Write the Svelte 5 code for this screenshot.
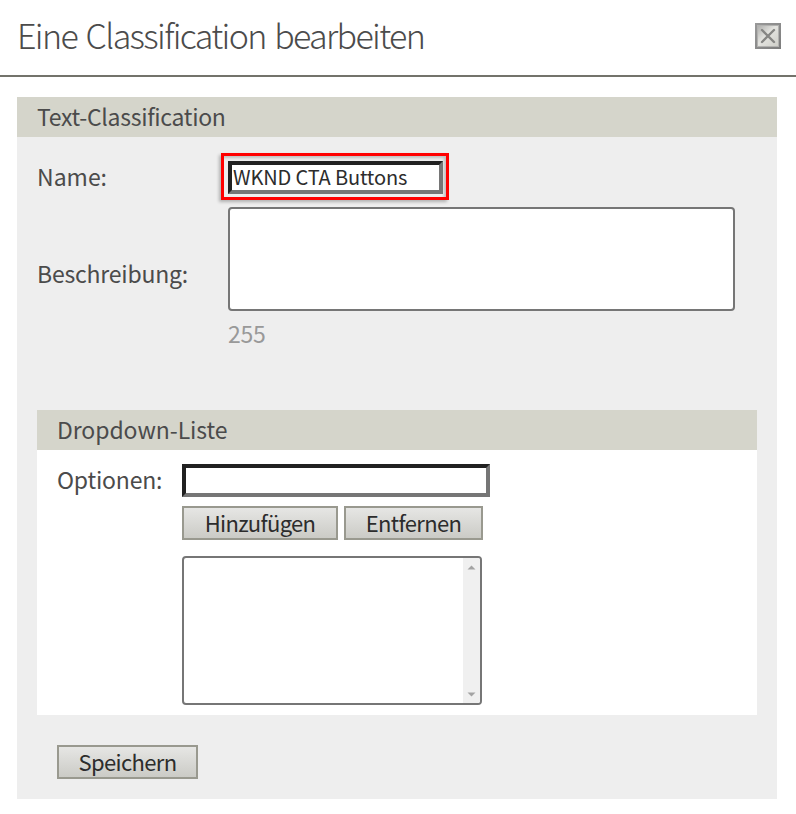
<script>
  let name = $state('WKND CTA Buttons');
  let description = $state('');
  let option = $state('');
  const limit = 255;
</script>

<main>
  <header>
    <h1>Eine Classification bearbeiten</h1>
    <button class="close" aria-label="Schließen">
      <svg width="26" height="26" viewBox="0 0 26 26">
        <defs>
          <linearGradient id="rim" x1="0" y1="0" x2="1" y2="1">
            <stop offset="0" stop-color="#999" />
            <stop offset="0.5" stop-color="#8c8c8c" />
            <stop offset="1" stop-color="#7c7c7c" />
          </linearGradient>
          <linearGradient id="face" x1="0" y1="0" x2="1" y2="1">
            <stop offset="0" stop-color="#b0b0ae" />
            <stop offset="0.45" stop-color="#e4e4e0" />
            <stop offset="1" stop-color="#cfcfc9" />
          </linearGradient>
        </defs>
        <rect width="26" height="26" fill="url(#rim)" />
        <rect x="2" y="2" width="22" height="22" fill="#b2b2b0" />
        <rect x="3" y="3" width="20" height="20" fill="url(#face)" />
        <path d="M7 7 19 19M19 7 7 19" stroke="#868684" stroke-width="2.4" stroke-linecap="round" />
      </svg>
    </button>
  </header>

  <section class="panel">
    <h2 class="panel-title">Text-Classification</h2>
    <div class="row name-row">
      <label for="name">Name:</label>
      <div class="highlight"><input id="name" bind:value={name} /></div>
    </div>
    <div class="row description-row">
      <label for="description">Beschreibung:</label>
      <textarea id="description" bind:value={description}></textarea>
    </div>
    <div class="counter">{limit - description.length}</div>

    <section class="dropdown">
      <h2>Dropdown-Liste</h2>
      <div class="options">
        <label for="option">Optionen:</label>
        <div class="controls">
          <input id="option" bind:value={option} />
          <div class="actions">
            <button class="action add">Hinzufügen</button>
            <button class="action remove">Entfernen</button>
          </div>
          <div class="list">
            <div class="scrollbar">
              <svg width="9" height="5" viewBox="0 0 9 5"><path d="M4.5 0.5 8.5 4.5H.5Z" fill="#a3a3a3" /></svg>
              <svg width="9" height="5" viewBox="0 0 9 5"><path d="M.5 .5H8.5L4.5 4.5Z" fill="#a3a3a3" /></svg>
            </div>
          </div>
        </div>
      </div>
    </section>

    <button class="action save">Speichern</button>
  </section>
</main>

<style>
  :global(body) {
    margin: 0;
    background: #fff;
  }
  * {
    box-sizing: border-box;
  }
  main {
    width: 796px;
    height: 814px;
    overflow: hidden;
    background: #fff;
    color: #4b4b4b;
    font: 23px/30px 'Noto Sans CJK SC', 'Noto Sans', sans-serif;
  }
  header {
    height: 77px;
    padding: 0 15px 0 17px;
    border-bottom: 2px solid #73736b;
    display: flex;
    justify-content: space-between;
    align-items: flex-start;
  }
  h1 {
    margin: 15px 0 0;
    font-size: 34px;
    line-height: 40px;
    font-weight: 300;
    letter-spacing: -1.64px;
    word-spacing: 2.6px;
    white-space: nowrap;
  }
  .close {
    margin: 23px 0 0;
    padding: 0;
    border: 0;
    width: 26px;
    height: 26px;
    background: none;
  }
  svg {
    display: block;
  }
  .panel {
    width: 760px;
    height: 702px;
    margin: 20px 0 0 17px;
    background: #eee;
  }
  h2 {
    margin: 0;
    height: 40px;
    padding: 4px 20px 0;
    background: #d5d5cb;
    font-size: 23px;
    line-height: 30px;
    font-weight: 400;
    letter-spacing: -0.07px;
  }
  .panel-title {
    letter-spacing: -0.3px;
  }
  .row {
    display: flex;
    padding-left: 20px;
  }
  .row label {
    width: 184px;
    flex: none;
  }
  .name-row {
    padding-top: 16px;
    height: 70px;
  }
  .name-row label {
    padding-top: 8px;
  }
  .highlight {
    width: 228px;
    height: 47px;
    border: 3px solid #f00;
    padding: 5px 3px 0 4px;
    box-shadow: -2px 2px 3px rgba(0, 0, 0, 0.25), inset -2px 2px 3px rgba(0, 0, 0, 0.2);
  }
  input {
    display: block;
    margin: 0;
    border: 4px solid;
    border-color: #212121 #767676 #767676 #212121;
    border-radius: 0;
    background: #fff;
    color: #2c2c2c;
    outline: 0;
    font: inherit;
  }
  #name {
    width: 215px;
    height: 33px;
    padding: 0 1px 2px;
    font-size: 20px;
    line-height: 23px;
    letter-spacing: -0.15px;
  }
  .description-row label {
    width: 191px;
    padding-top: 51px;
    letter-spacing: -0.2px;
  }
  textarea {
    width: 507px;
    height: 104px;
    border: 2px solid #767676;
    border-radius: 4px;
    background: #fff;
    resize: none;
    outline: 0;
    font: inherit;
  }
  .counter {
    height: 99px;
    padding: 7px 0 0 211px;
    color: #999;
    letter-spacing: -0.3px;
  }
  .dropdown {
    width: 720px;
    height: 305px;
    margin-left: 20px;
    background: #fff;
  }
  .options {
    display: flex;
    padding: 14px 20px 0;
  }
  .options label {
    width: 125px;
    flex: none;
    letter-spacing: -0.2px;
  }
  #option {
    width: 308px;
    height: 33px;
    padding: 0 1px;
  }
  .actions {
    display: flex;
    gap: 6px;
    margin: 9px 0 16px;
  }
  .action {
    display: block;
    height: 34px;
    padding: 0 0 2px;
    border: 2px solid #99998f;
    border-radius: 0;
    background: linear-gradient(#e6e6e4, #cbcbc6);
    color: #2c2c2c;
    font: inherit;
    font-size: 22px;
    line-height: 28px;
    letter-spacing: -0.65px;
    white-space: nowrap;
  }
  .add {
    width: 156px;
  }
  .remove {
    width: 139px;
  }
  .list {
    width: 300px;
    height: 149px;
    border: 2px solid #767676;
    border-radius: 4px;
    background: #fff;
    display: flex;
    justify-content: flex-end;
    overflow: hidden;
  }
  .scrollbar {
    width: 17px;
    background: #f0f0f0;
    display: flex;
    flex-direction: column;
    justify-content: space-between;
    align-items: center;
    padding: 7px 0 6px;
  }
  .save {
    width: 141px;
    margin: 30px 0 0 40px;
  }
</style>
